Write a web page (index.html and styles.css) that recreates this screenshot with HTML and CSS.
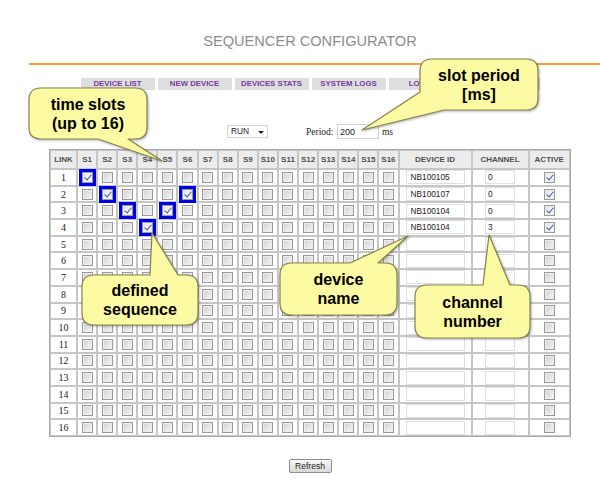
FILE: index.html
```html
<!DOCTYPE html>
<html lang="en">
<head>
<meta charset="utf-8">
<title>Sequencer Configurator</title>
<link rel="stylesheet" href="styles.css">
</head>
<body>
<div class="page">
  <h1 class="title">SEQUENCER CONFIGURATOR</h1>
  <div class="rule"></div>
  <nav class="tabs">
    <a class="tab">DEVICE LIST</a>
    <a class="tab">NEW DEVICE</a>
    <a class="tab">DEVICES STATS</a>
    <a class="tab">SYSTEM LOGS</a>
    <a class="tab">LOGOUT</a>
    <a class="tab"></a>
  </nav>
  <div class="controls">
    <span class="sel"><select class="mode"><option>RUN</option><option>STOP</option></select></span>
    <span class="lbl">Period:</span>
    <input class="per" type="text" value="200">
    <span class="unit">ms</span>
  </div>
  <table class="grid">
    <thead>
      <tr>
        <th class="c-link">LINK</th>
        <th class="c-s">S1</th><th class="c-s">S2</th><th class="c-s">S3</th><th class="c-s">S4</th>
        <th class="c-s">S5</th><th class="c-s">S6</th><th class="c-s">S7</th><th class="c-s">S8</th>
        <th class="c-s">S9</th><th class="c-s">S10</th><th class="c-s">S11</th><th class="c-s">S12</th>
        <th class="c-s">S13</th><th class="c-s">S14</th><th class="c-s">S15</th><th class="c-s">S16</th>
        <th class="c-dev">DEVICE ID</th>
        <th class="c-ch">CHANNEL</th>
        <th class="c-act">ACTIVE</th>
      </tr>
    </thead>
    <tbody>
      <tr><td class="n">1</td>
        <td><input type="checkbox" class="hl" checked></td><td><input type="checkbox"></td><td><input type="checkbox"></td><td><input type="checkbox"></td>
        <td><input type="checkbox"></td><td><input type="checkbox"></td><td><input type="checkbox"></td><td><input type="checkbox"></td>
        <td><input type="checkbox"></td><td><input type="checkbox"></td><td><input type="checkbox"></td><td><input type="checkbox"></td>
        <td><input type="checkbox"></td><td><input type="checkbox"></td><td><input type="checkbox"></td><td><input type="checkbox"></td>
        <td><input class="dev" type="text" value="NB100105"></td><td><input class="ch" type="text" value="0"></td><td><input type="checkbox" checked></td></tr>
      <tr><td class="n">2</td>
        <td><input type="checkbox"></td><td><input type="checkbox" class="hl" checked></td><td><input type="checkbox"></td><td><input type="checkbox"></td>
        <td><input type="checkbox"></td><td><input type="checkbox" class="hl" checked></td><td><input type="checkbox"></td><td><input type="checkbox"></td>
        <td><input type="checkbox"></td><td><input type="checkbox"></td><td><input type="checkbox"></td><td><input type="checkbox"></td>
        <td><input type="checkbox"></td><td><input type="checkbox"></td><td><input type="checkbox"></td><td><input type="checkbox"></td>
        <td><input class="dev" type="text" value="NB100107"></td><td><input class="ch" type="text" value="0"></td><td><input type="checkbox" checked></td></tr>
      <tr><td class="n">3</td>
        <td><input type="checkbox"></td><td><input type="checkbox"></td><td><input type="checkbox" class="hl" checked></td><td><input type="checkbox"></td>
        <td><input type="checkbox" class="hl" checked></td><td><input type="checkbox"></td><td><input type="checkbox"></td><td><input type="checkbox"></td>
        <td><input type="checkbox"></td><td><input type="checkbox"></td><td><input type="checkbox"></td><td><input type="checkbox"></td>
        <td><input type="checkbox"></td><td><input type="checkbox"></td><td><input type="checkbox"></td><td><input type="checkbox"></td>
        <td><input class="dev" type="text" value="NB100104"></td><td><input class="ch" type="text" value="0"></td><td><input type="checkbox" checked></td></tr>
      <tr><td class="n">4</td>
        <td><input type="checkbox"></td><td><input type="checkbox"></td><td><input type="checkbox"></td><td><input type="checkbox" class="hl" checked></td>
        <td><input type="checkbox"></td><td><input type="checkbox"></td><td><input type="checkbox"></td><td><input type="checkbox"></td>
        <td><input type="checkbox"></td><td><input type="checkbox"></td><td><input type="checkbox"></td><td><input type="checkbox"></td>
        <td><input type="checkbox"></td><td><input type="checkbox"></td><td><input type="checkbox"></td><td><input type="checkbox"></td>
        <td><input class="dev" type="text" value="NB100104"></td><td><input class="ch" type="text" value="3"></td><td><input type="checkbox" checked></td></tr>
      <tr><td class="n">5</td>
        <td><input type="checkbox"></td><td><input type="checkbox"></td><td><input type="checkbox"></td><td><input type="checkbox"></td>
        <td><input type="checkbox"></td><td><input type="checkbox"></td><td><input type="checkbox"></td><td><input type="checkbox"></td>
        <td><input type="checkbox"></td><td><input type="checkbox"></td><td><input type="checkbox"></td><td><input type="checkbox"></td>
        <td><input type="checkbox"></td><td><input type="checkbox"></td><td><input type="checkbox"></td><td><input type="checkbox"></td>
        <td><input class="dev" type="text"></td><td><input class="ch" type="text"></td><td><input type="checkbox"></td></tr>
      <tr><td class="n">6</td>
        <td><input type="checkbox"></td><td><input type="checkbox"></td><td><input type="checkbox"></td><td><input type="checkbox"></td>
        <td><input type="checkbox"></td><td><input type="checkbox"></td><td><input type="checkbox"></td><td><input type="checkbox"></td>
        <td><input type="checkbox"></td><td><input type="checkbox"></td><td><input type="checkbox"></td><td><input type="checkbox"></td>
        <td><input type="checkbox"></td><td><input type="checkbox"></td><td><input type="checkbox"></td><td><input type="checkbox"></td>
        <td><input class="dev" type="text"></td><td><input class="ch" type="text"></td><td><input type="checkbox"></td></tr>
      <tr><td class="n">7</td>
        <td><input type="checkbox"></td><td><input type="checkbox"></td><td><input type="checkbox"></td><td><input type="checkbox"></td>
        <td><input type="checkbox"></td><td><input type="checkbox"></td><td><input type="checkbox"></td><td><input type="checkbox"></td>
        <td><input type="checkbox"></td><td><input type="checkbox"></td><td><input type="checkbox"></td><td><input type="checkbox"></td>
        <td><input type="checkbox"></td><td><input type="checkbox"></td><td><input type="checkbox"></td><td><input type="checkbox"></td>
        <td><input class="dev" type="text"></td><td><input class="ch" type="text"></td><td><input type="checkbox"></td></tr>
      <tr><td class="n">8</td>
        <td><input type="checkbox"></td><td><input type="checkbox"></td><td><input type="checkbox"></td><td><input type="checkbox"></td>
        <td><input type="checkbox"></td><td><input type="checkbox"></td><td><input type="checkbox"></td><td><input type="checkbox"></td>
        <td><input type="checkbox"></td><td><input type="checkbox"></td><td><input type="checkbox"></td><td><input type="checkbox"></td>
        <td><input type="checkbox"></td><td><input type="checkbox"></td><td><input type="checkbox"></td><td><input type="checkbox"></td>
        <td><input class="dev" type="text"></td><td><input class="ch" type="text"></td><td><input type="checkbox"></td></tr>
      <tr><td class="n">9</td>
        <td><input type="checkbox"></td><td><input type="checkbox"></td><td><input type="checkbox"></td><td><input type="checkbox"></td>
        <td><input type="checkbox"></td><td><input type="checkbox"></td><td><input type="checkbox"></td><td><input type="checkbox"></td>
        <td><input type="checkbox"></td><td><input type="checkbox"></td><td><input type="checkbox"></td><td><input type="checkbox"></td>
        <td><input type="checkbox"></td><td><input type="checkbox"></td><td><input type="checkbox"></td><td><input type="checkbox"></td>
        <td><input class="dev" type="text"></td><td><input class="ch" type="text"></td><td><input type="checkbox"></td></tr>
      <tr><td class="n">10</td>
        <td><input type="checkbox"></td><td><input type="checkbox"></td><td><input type="checkbox"></td><td><input type="checkbox"></td>
        <td><input type="checkbox"></td><td><input type="checkbox"></td><td><input type="checkbox"></td><td><input type="checkbox"></td>
        <td><input type="checkbox"></td><td><input type="checkbox"></td><td><input type="checkbox"></td><td><input type="checkbox"></td>
        <td><input type="checkbox"></td><td><input type="checkbox"></td><td><input type="checkbox"></td><td><input type="checkbox"></td>
        <td><input class="dev" type="text"></td><td><input class="ch" type="text"></td><td><input type="checkbox"></td></tr>
      <tr><td class="n">11</td>
        <td><input type="checkbox"></td><td><input type="checkbox"></td><td><input type="checkbox"></td><td><input type="checkbox"></td>
        <td><input type="checkbox"></td><td><input type="checkbox"></td><td><input type="checkbox"></td><td><input type="checkbox"></td>
        <td><input type="checkbox"></td><td><input type="checkbox"></td><td><input type="checkbox"></td><td><input type="checkbox"></td>
        <td><input type="checkbox"></td><td><input type="checkbox"></td><td><input type="checkbox"></td><td><input type="checkbox"></td>
        <td><input class="dev" type="text"></td><td><input class="ch" type="text"></td><td><input type="checkbox"></td></tr>
      <tr><td class="n">12</td>
        <td><input type="checkbox"></td><td><input type="checkbox"></td><td><input type="checkbox"></td><td><input type="checkbox"></td>
        <td><input type="checkbox"></td><td><input type="checkbox"></td><td><input type="checkbox"></td><td><input type="checkbox"></td>
        <td><input type="checkbox"></td><td><input type="checkbox"></td><td><input type="checkbox"></td><td><input type="checkbox"></td>
        <td><input type="checkbox"></td><td><input type="checkbox"></td><td><input type="checkbox"></td><td><input type="checkbox"></td>
        <td><input class="dev" type="text"></td><td><input class="ch" type="text"></td><td><input type="checkbox"></td></tr>
      <tr><td class="n">13</td>
        <td><input type="checkbox"></td><td><input type="checkbox"></td><td><input type="checkbox"></td><td><input type="checkbox"></td>
        <td><input type="checkbox"></td><td><input type="checkbox"></td><td><input type="checkbox"></td><td><input type="checkbox"></td>
        <td><input type="checkbox"></td><td><input type="checkbox"></td><td><input type="checkbox"></td><td><input type="checkbox"></td>
        <td><input type="checkbox"></td><td><input type="checkbox"></td><td><input type="checkbox"></td><td><input type="checkbox"></td>
        <td><input class="dev" type="text"></td><td><input class="ch" type="text"></td><td><input type="checkbox"></td></tr>
      <tr><td class="n">14</td>
        <td><input type="checkbox"></td><td><input type="checkbox"></td><td><input type="checkbox"></td><td><input type="checkbox"></td>
        <td><input type="checkbox"></td><td><input type="checkbox"></td><td><input type="checkbox"></td><td><input type="checkbox"></td>
        <td><input type="checkbox"></td><td><input type="checkbox"></td><td><input type="checkbox"></td><td><input type="checkbox"></td>
        <td><input type="checkbox"></td><td><input type="checkbox"></td><td><input type="checkbox"></td><td><input type="checkbox"></td>
        <td><input class="dev" type="text"></td><td><input class="ch" type="text"></td><td><input type="checkbox"></td></tr>
      <tr><td class="n">15</td>
        <td><input type="checkbox"></td><td><input type="checkbox"></td><td><input type="checkbox"></td><td><input type="checkbox"></td>
        <td><input type="checkbox"></td><td><input type="checkbox"></td><td><input type="checkbox"></td><td><input type="checkbox"></td>
        <td><input type="checkbox"></td><td><input type="checkbox"></td><td><input type="checkbox"></td><td><input type="checkbox"></td>
        <td><input type="checkbox"></td><td><input type="checkbox"></td><td><input type="checkbox"></td><td><input type="checkbox"></td>
        <td><input class="dev" type="text"></td><td><input class="ch" type="text"></td><td><input type="checkbox"></td></tr>
      <tr><td class="n">16</td>
        <td><input type="checkbox"></td><td><input type="checkbox"></td><td><input type="checkbox"></td><td><input type="checkbox"></td>
        <td><input type="checkbox"></td><td><input type="checkbox"></td><td><input type="checkbox"></td><td><input type="checkbox"></td>
        <td><input type="checkbox"></td><td><input type="checkbox"></td><td><input type="checkbox"></td><td><input type="checkbox"></td>
        <td><input type="checkbox"></td><td><input type="checkbox"></td><td><input type="checkbox"></td><td><input type="checkbox"></td>
        <td><input class="dev" type="text"></td><td><input class="ch" type="text"></td><td><input type="checkbox"></td></tr>
    </tbody>
  </table>
  <button class="btn" type="button">Refresh</button>
</div>

<div class="callouts">
  <svg class="shapes" width="600" height="496" viewBox="0 0 600 496">
    <path d="M41,88 H135 Q147,88 147,100 V127 Q147,139 135,139 H128 L162,161 L98,139 H41 Q29,139 29,127 V100 Q29,88 41,88 Z"/>
    <path d="M432,59 H526 Q538,59 538,71 V98 Q538,110 526,110 H444 L362,130 L420,92 V71 Q420,59 432,59 Z"/>
    <path d="M94,275 H150 L152,233 L178,275 H186 Q198,275 198,287 V313 Q198,325 186,325 H94 Q82,325 82,313 V287 Q82,275 94,275 Z"/>
    <path d="M292,263 H350 L408,236 L378,263 H385 Q397,263 397,275 V303 Q397,315 385,315 H292 Q280,315 280,303 V275 Q280,263 292,263 Z"/>
    <path d="M427,285 H483 L489,235 L510,285 H518 Q530,285 530,297 V326 Q530,338 518,338 H427 Q415,338 415,326 V297 Q415,285 427,285 Z"/>
  </svg>
  <div class="note n1">time slots<br>(up to 16)</div>
  <div class="note n2">slot period<br>[ms]</div>
  <div class="note n3">defined<br>sequence</div>
  <div class="note n4">device<br>name</div>
  <div class="note n5">channel<br>number</div>
</div>
</body>
</html>
```

FILE: styles.css
```css
* { box-sizing: border-box; }

html, body {
  margin: 0;
  padding: 0;
  background: #ffffff;
}

body {
  width: 600px;
  height: 496px;
  overflow: hidden;
  position: relative;
  font-family: "Liberation Sans", Arial, sans-serif;
  color: #222;
}

.page {
  padding-left: 20px;
}

.title {
  margin: 0;
  padding-top: 32px;
  line-height: 18px;
  font-size: 14.6px;
  font-weight: normal;
  color: #8c8c8c;
  text-align: center;
}

.rule {
  margin: 13px 0 0 9px;
  border-top: 2px solid #fb9d34;
}

.tabs {
  display: flex;
  justify-content: center;
  gap: 3px;
  margin-top: 13px;
}

.tab {
  width: 74px;
  height: 12px;
  background: #dedede;
  color: #7a3c9c;
  font-size: 7.8px;
  font-weight: bold;
  line-height: 12px;
  text-align: center;
  text-decoration: none;
}

.controls {
  display: flex;
  justify-content: center;
  align-items: center;
  height: 15px;
  margin-top: 34px;
}

.sel {
  position: relative;
  display: block;
  width: 41px;
  height: 13px;
  margin-right: 38px;
}

.sel::after {
  content: "";
  position: absolute;
  right: 4px;
  top: 6px;
  border-left: 3px solid transparent;
  border-right: 3px solid transparent;
  border-top: 3px solid #222;
}

.mode {
  appearance: none;
  -webkit-appearance: none;
  display: block;
  width: 41px;
  height: 13px;
  margin: 0;
  padding: 0 0 0 3px;
  border: 1px solid #d2d2d2;
  border-radius: 0;
  background: #fff;
  font-family: "Liberation Sans", Arial, sans-serif;
  font-size: 8.4px;
  line-height: 11px;
  color: #222;
}

.lbl, .unit {
  font-family: "Liberation Serif", "Times New Roman", serif;
  font-size: 9.5px;
  color: #222;
}

.per {
  width: 42px;
  height: 15px;
  margin: 0 3px 0 3.5px;
  padding: 0 0 0 2px;
  border: 1px solid #ccd2da;
  font-family: "Liberation Sans", Arial, sans-serif;
  font-size: 9px;
  color: #222;
}

.grid {
  width: 522px;
  margin: 10px auto 0;
  table-layout: fixed;
  border-collapse: separate;
  border-spacing: 0;
  border: 1px solid #a9a9a9;
}

.grid th,
.grid td {
  padding: 0;
  border: 1px solid #c6c6c6;
  text-align: center;
  vertical-align: middle;
}

.grid th {
  height: 19px;
  background: #ececec;
  font-size: 8px;
  font-weight: bold;
  color: #505050;
}

.grid td {
  height: 16.7px;
  background: #fff;
}

.c-link { width: 27px; }
.c-s { width: 20.1px; }
.c-dev { width: 73px; }
.c-ch { width: 57px; }
.c-act { width: 41.4px; }

.n {
  font-family: "Liberation Serif", "Times New Roman", serif;
  font-size: 10px;
  color: #1a1a1a;
}

.grid input[type="checkbox"] {
  appearance: none;
  -webkit-appearance: none;
  position: relative;
  display: block;
  width: 11px;
  height: 11px;
  margin: 0 auto;
  border: 1px solid #9a9a9a;
  border-radius: 0;
  background: linear-gradient(135deg, #d0d0d0 0%, #e4e4e4 50%, #f6f6f6 100%);
  box-shadow: inset 0 0 0 1px #eeeeee;
}

.grid input[type="checkbox"]:checked {
  background: linear-gradient(135deg, #e2e2e2 0%, #f3f3f3 60%, #ffffff 100%);
}

.grid input[type="checkbox"]:checked::after {
  content: "";
  position: absolute;
  left: 3px;
  top: 0px;
  width: 3px;
  height: 6px;
  border: solid #4a5b9c;
  border-width: 0 1.5px 1.5px 0;
  transform: rotate(40deg);
}

.grid input.hl {
  outline: 3px solid #0000e4;
}

.dev {
  display: block;
  width: 59px;
  height: 14px;
  margin: 0 auto;
  padding: 0 0 0 4px;
  border: 1px solid #e0e0e0;
  font-family: "Liberation Sans", Arial, sans-serif;
  font-size: 8.3px;
  color: #222;
}

.ch {
  display: block;
  width: 30px;
  height: 14px;
  margin: 0 auto;
  padding: 0 0 0 2px;
  border: 1px solid #e0e0e0;
  font-family: "Liberation Sans", Arial, sans-serif;
  font-size: 8.3px;
  color: #222;
}

.btn {
  display: block;
  width: 43px;
  height: 14px;
  margin: 22px auto 0;
  padding: 0;
  border: 1px solid #8d8d8d;
  border-radius: 2px;
  background: linear-gradient(#f8f8f8, #dadada);
  font-family: "Liberation Sans", Arial, sans-serif;
  font-size: 8.5px;
  color: #222;
}

.callouts {
  position: absolute;
  left: 0;
  top: 0;
  width: 600px;
  height: 496px;
  pointer-events: none;
}

.shapes {
  position: absolute;
  left: 0;
  top: 0;
  filter: drop-shadow(1.5px 1.5px 1px rgba(0, 0, 0, 0.3));
}

.shapes path {
  fill: #fcfaa2;
  stroke: #87834f;
  stroke-width: 1.2;
  stroke-linejoin: round;
}

.note {
  position: absolute;
  display: flex;
  align-items: center;
  justify-content: center;
  text-align: center;
  font-family: "Liberation Sans", Arial, sans-serif;
  font-size: 16px;
  font-weight: bold;
  line-height: 19px;
  color: #000;
}

.n1 { left: 29px; top: 88px; width: 118px; height: 51px; }
.n2 { left: 420px; top: 59px; width: 118px; height: 51px; }
.n3 { left: 82px; top: 275px; width: 116px; height: 50px; }
.n4 { left: 280px; top: 263px; width: 117px; height: 52px; }
.n5 { left: 415px; top: 285px; width: 115px; height: 53px; }
```
